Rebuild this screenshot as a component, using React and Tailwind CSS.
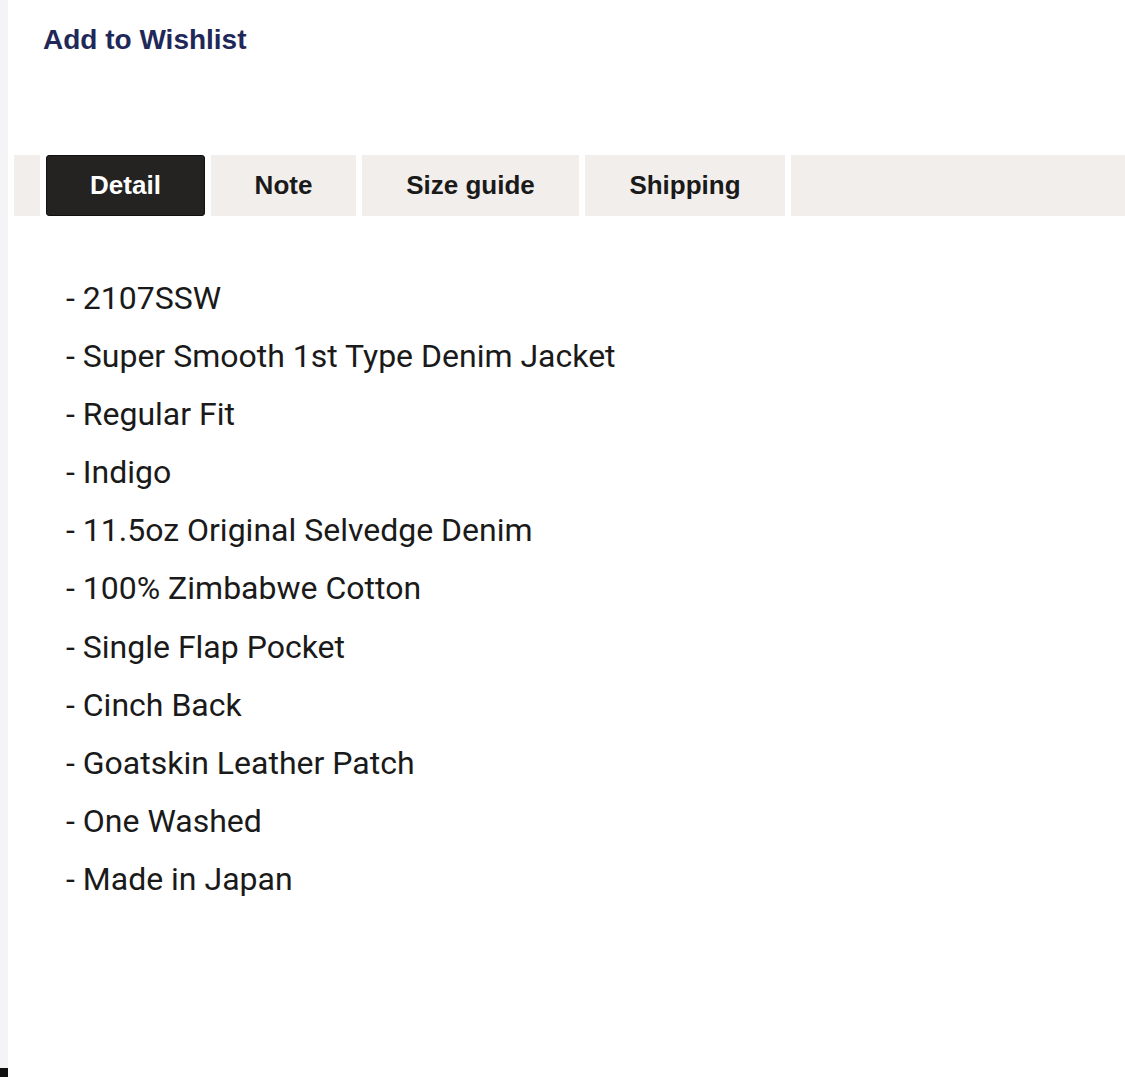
import React from 'react';

const details = [
  '2107SSW',
  'Super Smooth 1st Type Denim Jacket',
  'Regular Fit',
  'Indigo',
  '11.5oz Original Selvedge Denim',
  '100% Zimbabwe Cotton',
  'Single Flap Pocket',
  'Cinch Back',
  'Goatskin Leather Patch',
  'One Washed',
  'Made in Japan',
];

const tabs = [
  { label: 'Detail', w: 'w-[159px]' },
  { label: 'Note', w: 'w-[145px]' },
  { label: 'Size guide', w: 'w-[217px]' },
  { label: 'Shipping', w: 'w-[200px]' },
];

export default function App() {
  return (
    <div className="flex h-[1077px] w-[1125px] bg-white overflow-hidden">
      {/* left strip */}
      <div className="flex w-[8px] flex-col">
        <div className="flex-1 bg-[#f4f4f6]" />
        <div className="h-[9px] bg-[#111]" />
      </div>

      <div className="flex flex-1 flex-col pl-[6px]">
        <div className="pl-[29px] pt-[24px] font-['Liberation_Sans',Arial,sans-serif] text-[28px] font-bold leading-[32px] text-[#1f2858]">
          Add to Wishlist
        </div>

        {/* tab bar */}
        <div className="mt-[99px] flex h-[61px] gap-[6px] font-['Liberation_Sans',Arial,sans-serif] text-[26px] font-bold">
          <div className="w-[26px] bg-[#f2eeeb]" />
          {tabs.map((t, i) => (
            <div
              key={t.label}
              className={`${t.w} flex items-center justify-center ${
                i === 0
                  ? 'rounded-[3px] border border-[#111] bg-[#242322] text-white'
                  : 'bg-[#f2eeeb] text-[#1a1a1a]'
              }`}
            >
              {t.label}
            </div>
          ))}
          <div className="flex-1 bg-[#f2eeeb]" />
        </div>

        {/* detail list */}
        <ul className="pl-[52px] pt-[53px] font-['Roboto',Arial,sans-serif] text-[32px] leading-[58.1px] text-[#1a1a1a]">
          {details.map((d) => (
            <li key={d}>- {d}</li>
          ))}
        </ul>
      </div>
    </div>
  );
}
